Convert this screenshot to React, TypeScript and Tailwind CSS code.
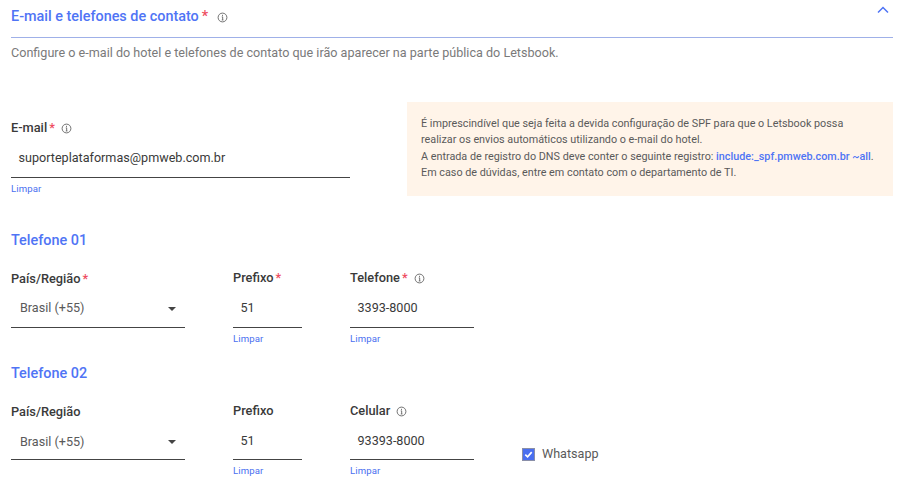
function Info({ className = "" }: { className?: string }) {
  return (
    <svg viewBox="0 0 12 12" className={`w-[11px] h-[11px] shrink-0 ${className}`} fill="none" stroke="#555" strokeWidth="0.9">
      <circle cx="6" cy="6" r="4.8" />
      <path d="M5.2 5.3H6.2V8.6M5.2 8.7H7" />
      <path d="M6 3.1V4.1" strokeWidth="1.1" />
    </svg>
  );
}
function Clear() {
  return <div className="text-[9.6px] leading-[12px] text-[#4a6ff0] mt-[5px] tracking-[0.1px]">Limpar</div>;
}
function Label({ text, star, info, infoGap = "ml-[6px]" }: { text: string; star?: boolean; info?: boolean; infoGap?: string }) {
  return (
    <div className="flex items-center h-[20px] text-[12.8px] font-medium text-[#3a3a3a]">
      <span>{text}</span>
      {star && <span className="text-[#ee4d5f] ml-[2px]">*</span>}
      {info && <Info className={infoGap} />}
    </div>
  );
}
function Field({ label, value, star, info, width, infoGap, input }: { label: string; value: string; star?: boolean; info?: boolean; width: string; infoGap?: string; input: string }) {
  return (
    <div className={`flex flex-col ${width}`}>
      <Label text={label} star={star} info={info} infoGap={infoGap} />
      <div className={`${input} border-b border-[#444] flex items-center pl-[7.5px] text-[12.6px] text-[#3a3a3a]`}>{value}</div>
      <Clear />
    </div>
  );
}
function CountrySelect({ star, input }: { star?: boolean; input: string }) {
  return (
    <div className="flex flex-col w-[174px] mr-[48px] pt-[1px]">
      <Label text="País/Região" star={star} />
      <div className={`${input} border-b border-[#444] flex items-center justify-between pl-[9px] pr-[9px] text-[12.6px] text-[#5a5a5a]`}>
        <span>Brasil (+55)</span>
        <span className="w-0 h-0 border-x-[4.5px] border-x-transparent border-t-[4.5px] border-t-[#444]" />
      </div>
    </div>
  );
}
export default function App() {
  return (
    <div className="w-[915px] h-[484px] overflow-hidden bg-white pl-[11px] pr-[22px] font-['Roboto',sans-serif]">
      <div className="h-[38px] border-b border-[#9fb0e8] flex items-start justify-between">
        <div className="flex items-center h-[34px] text-[14.4px] font-medium text-[#4f74f5]">
          <span>E-mail e telefones de contato</span>
          <span className="text-[#ee4d5f] ml-[3px]">*</span>
          <Info className="ml-[9px]" />
        </div>
        <svg viewBox="0 0 12 8" className="w-[12px] h-[8px] mt-[6px] mr-[4px]" fill="none" stroke="#4f74f5" strokeWidth="1.5">
          <path d="M1 6.5L6 1.5L11 6.5" />
        </svg>
      </div>
      <p className="mt-[6px] text-[12.6px] leading-[18px] text-[#7a7a7a]">
        Configure o e-mail do hotel e telefones de contato que irão aparecer na parte pública do Letsbook.
      </p>
      <div className="flex justify-between mt-[40px] h-[94px]">
        <div className="w-[339px] pt-[16px]">
          <Field label="E-mail" value="suporteplataformas@pmweb.com.br" star info width="w-[339px]" input="h-[40px] pt-[1px]" />
        </div>
        <div className="w-[486px] bg-[#fff4e9] pl-[14px] pt-[14px] text-[10.8px] leading-[16.4px] text-[#5a5a5a]">
          <p>É imprescindível que seja feita a devida configuração de SPF para que o Letsbook possa</p>
          <p>realizar os envios automáticos utilizando o e-mail do hotel.</p>
          <p>A entrada de registro do DNS deve conter o seguinte registro: <span className="font-medium text-[#4f74f5]">include:_spf.pmweb.com.br ~all</span>.</p>
          <p>Em caso de dúvidas, entre em contato com o departamento de TI.</p>
        </div>
      </div>
      <h3 className="mt-[35px] text-[14.4px] leading-[20px] font-medium text-[#4f74f5]">Telefone 01</h3>
      <div className="flex mt-[17px]">
        <CountrySelect star input="h-[39px] pt-[1px]" />
        <Field label="Prefixo" value="51" star width="w-[69px] mr-[48px]" input="h-[40px] pt-[2px]" />
        <Field label="Telefone" value="3393-8000" star info width="w-[124px]" infoGap="ml-[6px]" input="h-[40px] pt-[2px]" />
      </div>
      <h3 className="mt-[19px] text-[14.4px] leading-[20px] font-medium text-[#4f74f5]">Telefone 02</h3>
      <div className="flex mt-[17px]">
        <CountrySelect input="h-[38px] pt-[3px]" />
        <Field label="Prefixo" value="51" width="w-[69px] mr-[48px]" input="h-[39px] pt-[3px]" />
        <Field label="Celular" value="93393-8000" info width="w-[124px]" infoGap="ml-[6px]" input="h-[39px] pt-[3px]" />
        <div className="flex items-center ml-[48px] mt-[43px] h-[20px] self-start text-[12.6px] text-[#5a5a5a]">
          <span className="w-[13px] h-[13px] bg-[#4a6ff0] border border-[#8a8fa8] mr-[7px] flex items-center justify-center">
            <svg viewBox="0 0 12 12" className="w-[11px] h-[11px]" fill="none" stroke="#fff" strokeWidth="1.8"><path d="M2.5 6.2L5 8.6L9.5 3.4" /></svg>
          </span>
          Whatsapp
        </div>
      </div>
    </div>
  );
}
